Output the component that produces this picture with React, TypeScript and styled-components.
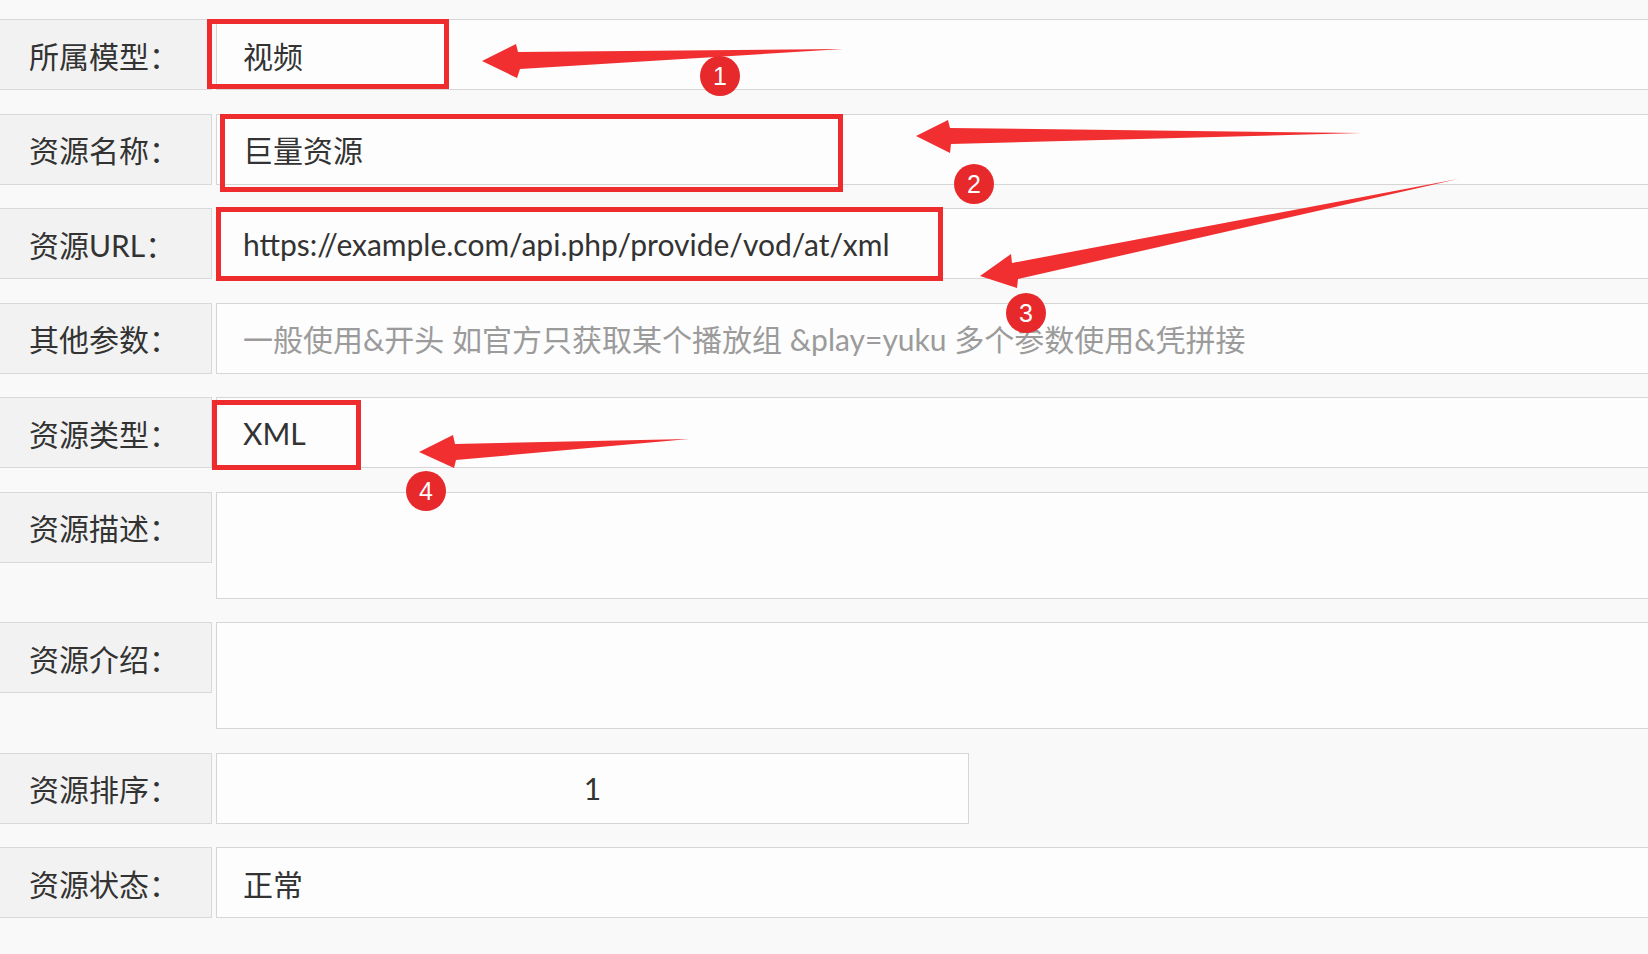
import { FC } from "react"
import styled, { createGlobalStyle } from "styled-components"

const GlobalStyle = createGlobalStyle`
  html, body {
    margin: 0;
    padding: 0;
    background: #f9f9f9;
  }
  * { box-sizing: border-box; }
`

// #region styled
const Page = styled.div`
  position: relative;
  width: 100%;
  height: 954px;
  overflow: hidden;
  padding-top: 19px;
  font-family: Lato, "Noto Sans CJK SC", sans-serif;
  color: #333;
`

const Form = styled.div`
  display: flex;
  flex-direction: column;
  gap: 23.5px;
`

const Row = styled.div`
  display: flex;
  align-items: flex-start;
  gap: 4px;
`

const Label = styled.div`
  flex: none;
  width: 212px;
  height: 71px;
  display: flex;
  align-items: center;
  padding-left: 29px;
  background: #f2f2f2;
  border: 1px solid #d9d9d9;
  border-left: none;
  font-size: 30px;
  color: #333;
  white-space: nowrap;
`

const Field = styled.div<{ $tall?: boolean; $width?: number; $muted?: boolean; $center?: boolean }>`
  flex: ${p => (p.$width ? "none" : "1")};
  width: ${p => (p.$width ? `${p.$width}px` : "auto")};
  margin-right: ${p => (p.$width ? "0" : "-10px")};
  height: ${p => (p.$tall ? "107px" : "71px")};
  display: flex;
  align-items: center;
  justify-content: ${p => (p.$center ? "center" : "flex-start")};
  padding-left: ${p => (p.$center ? "0" : "26px")};
  background: #fdfdfd;
  border: 1px solid #d6d6d6;
  font-size: 30px;
  color: ${p => (p.$muted ? "#9b9b9b" : "#333")};
  white-space: nowrap;
`

const Marks = styled.svg`
  position: absolute;
  left: 0;
  top: 0;
  pointer-events: none;
`

const Badge = styled.div<{ $x: number; $y: number }>`
  position: absolute;
  left: ${p => p.$x - 20}px;
  top: ${p => p.$y - 20}px;
  width: 40px;
  height: 40px;
  border-radius: 50%;
  background: #e7292b;
  color: #fff;
  display: flex;
  align-items: center;
  justify-content: center;
  font-family: "Liberation Sans", Arial, sans-serif;
  font-size: 25px;
  line-height: 1;
`
// #endregion

type FieldRow = {
  label: string
  value?: string
  muted?: boolean
  tall?: boolean
  width?: number
  center?: boolean
}

const rows: FieldRow[] = [
  { label: "所属模型：", value: "视频" },
  { label: "资源名称：", value: "巨量资源" },
  { label: "资源URL：", value: "https://example.com/api.php/provide/vod/at/xml" },
  { label: "其他参数：", value: "一般使用&开头 如官方只获取某个播放组 &play=yuku 多个参数使用&凭拼接", muted: true },
  { label: "资源类型：", value: "XML" },
  { label: "资源描述：", tall: true },
  { label: "资源介绍：", tall: true },
  { label: "资源排序：", value: "1", width: 753, center: true },
  { label: "资源状态：", value: "正常" },
]

const boxes = [
  { x: 209.5, y: 21.5, w: 237, h: 65 },
  { x: 222.5, y: 116.5, w: 618, h: 73 },
  { x: 218.5, y: 209.5, w: 722, h: 69 },
  { x: 214.5, y: 402.5, w: 144, h: 65 },
]

const arrows = [
  "482,61 516,44 518,52 843,49 520,69 517,78",
  "916,136 948,120 950,128 1361,133 951,144 950,153",
  "980,276 1011,254 1012,263 1458,179 1018,279 1017,288",
  "419,452 453,435 455,444 689,439 456,460 454,468",
]

const badges = [
  { n: 1, x: 720, y: 76 },
  { n: 2, x: 974, y: 184 },
  { n: 3, x: 1026, y: 313 },
  { n: 4, x: 426, y: 491 },
]

const App: FC = () => (
  <>
    <GlobalStyle />
    <Page>
      <Form>
        {rows.map(r => (
          <Row key={r.label}>
            <Label>{r.label}</Label>
            <Field $tall={r.tall} $width={r.width} $muted={r.muted} $center={r.center}>
              {r.value}
            </Field>
          </Row>
        ))}
      </Form>

      <Marks width={1648} height={954} viewBox="0 0 1648 954">
        {boxes.map((b, i) => (
          <rect key={i} x={b.x} y={b.y} width={b.w} height={b.h} fill="none" stroke="#ee2b2d" strokeWidth={5} />
        ))}
        {arrows.map((pts, i) => (
          <polygon key={i} points={pts} fill="#f12f30" strokeLinejoin="round" />
        ))}
      </Marks>
      {badges.map(b => (
        <Badge key={b.n} $x={b.x} $y={b.y}>{b.n}</Badge>
      ))}
    </Page>
  </>
)

export default App
